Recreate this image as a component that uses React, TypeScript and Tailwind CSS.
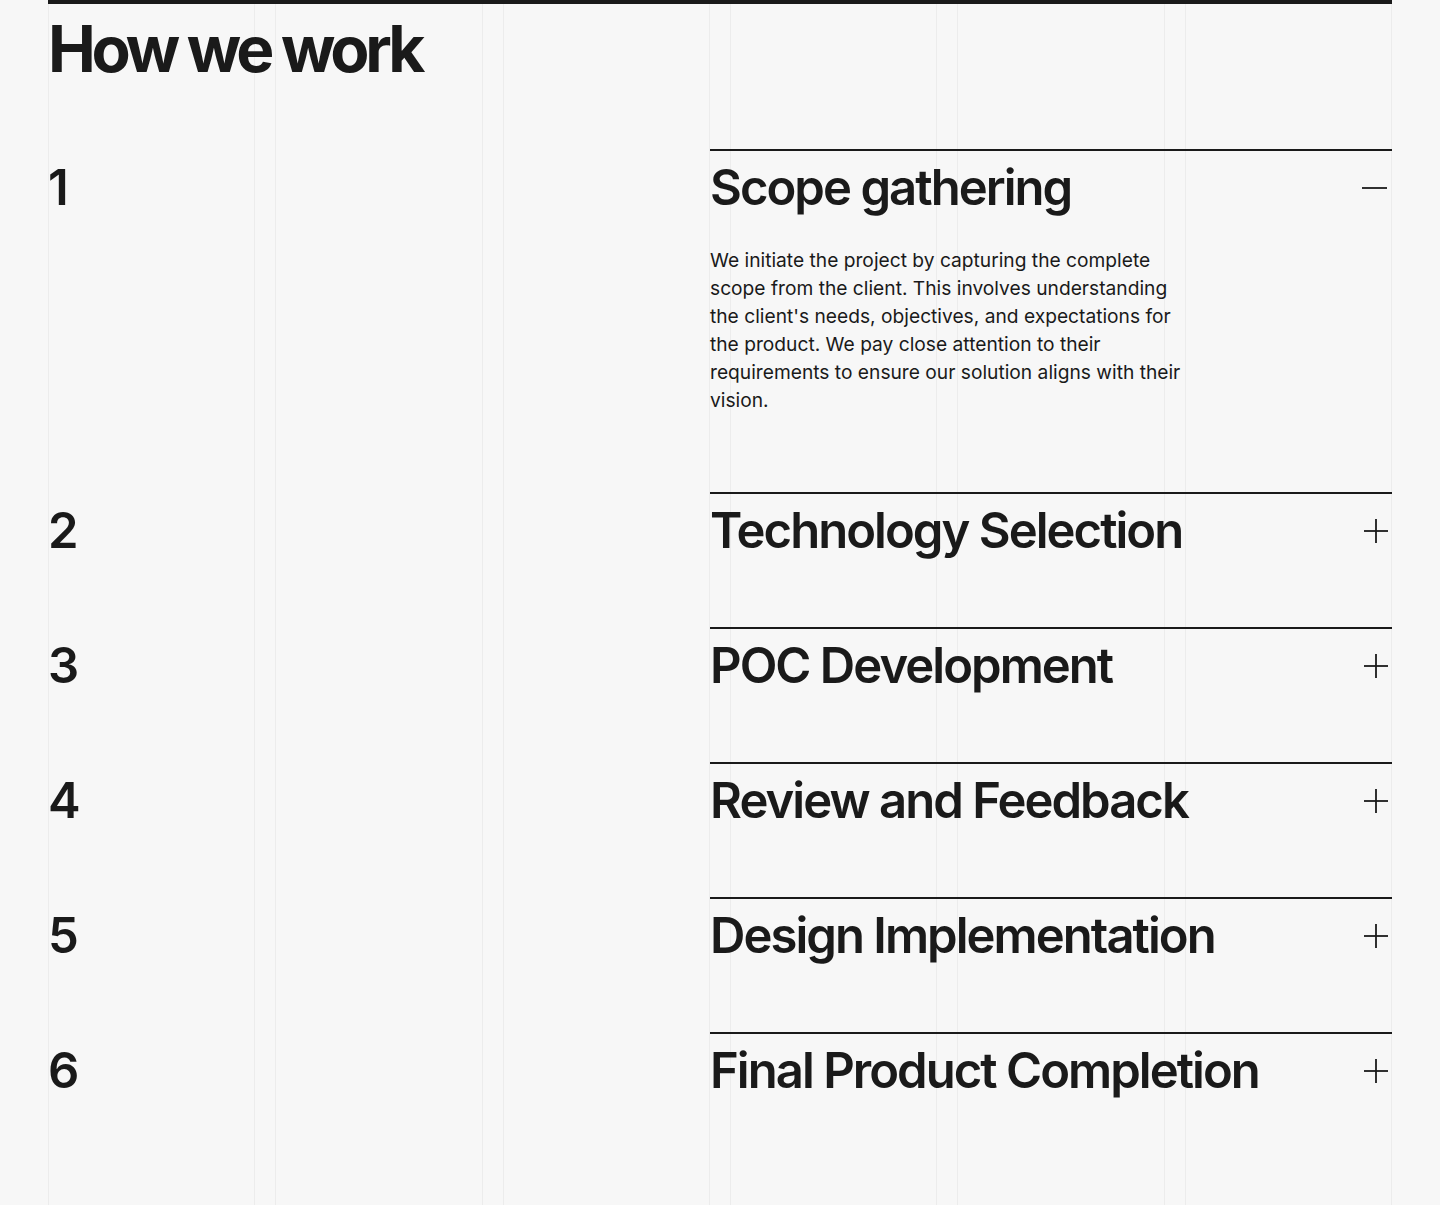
import { Fragment } from 'react';

const steps = [
    {
        title: 'Scope gathering',
        body: "We initiate the project by capturing the complete scope from the client. This involves understanding the client's needs, objectives, and expectations for the product. We pay close attention to their requirements to ensure our solution aligns with their vision.",
    },
    { title: 'Technology Selection' },
    { title: 'POC Development' },
    { title: 'Review and Feedback' },
    { title: 'Design Implementation' },
    { title: 'Final Product Completion' },
];

function Toggle({ open }: { open: boolean }) {
    return (
        <svg width="32" height="32" viewBox="0 0 32 32" className="mt-[21px] shrink-0 text-[#1a1a1a]">
            {open ? (
                <line x1="2" y1="16" x2="27" y2="16" stroke="currentColor" strokeWidth="1.8" />
            ) : (
                <>
                    <line x1="4" y1="16" x2="28" y2="16" stroke="currentColor" strokeWidth="1.8" />
                    <line x1="16" y1="4" x2="16" y2="28" stroke="currentColor" strokeWidth="1.8" />
                </>
            )}
        </svg>
    );
}

export default function App() {
    return (
        <div className="relative min-h-screen bg-[#f7f7f7] font-['Inter',sans-serif] text-[#1a1a1a]">
            {/* column guides */}
            <div className="pointer-events-none absolute inset-0 grid grid-cols-6 gap-5 px-12">
                {Array.from({ length: 6 }).map((_, i) => (
                    <div key={i} className="border-x border-[#ececec]" />
                ))}
            </div>

            <div className="relative px-12 pb-[38px]">
                <div className="h-1 bg-[#1a1a1a]" />
                <h2 className="mt-[13px] text-[64px] font-bold leading-none tracking-[-0.066em]">How we work</h2>

                <div className="mt-[68px] flex flex-col">
                    {steps.map((s, i) => (
                        <Fragment key={s.title}>
                            <div className="flex">
                                <div className="w-[662px] shrink-0 pt-[9px] text-[49px] font-semibold leading-[60px] tracking-[-0.02em]">
                                    {i + 1}
                                </div>
                                <div className="flex-1 border-t-2 border-[#1a1a1a]">
                                    <div className="flex items-start justify-between">
                                        <h3 className="pt-[7px] text-[49px] font-semibold leading-[60px] tracking-[-0.04em]">{s.title}</h3>
                                        <Toggle open={!!s.body} />
                                    </div>
                                    {s.body ? (
                                        <p className="mt-[28px] max-w-[480px] pb-[78px] text-[19.2px] leading-[28px]">{s.body}</p>
                                    ) : (
                                        <div className="h-[66px]" />
                                    )}
                                </div>
                            </div>
                        </Fragment>
                    ))}
                </div>
            </div>
        </div>
    );
}
